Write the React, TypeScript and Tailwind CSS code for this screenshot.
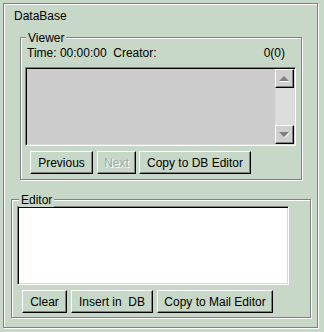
import React from 'react'

const etched = 'relative border border-[#808080] shadow-[inset_1px_1px_0_#fff,1px_1px_0_#fff]'
const sunken =
  'border border-t-[#808080] border-l-[#808080] border-r-white border-b-white shadow-[inset_1px_1px_0_#000,inset_-1px_-1px_0_#d8d8d8]'
const raised =
  'border border-t-white border-l-white border-r-black border-b-black shadow-[inset_-1px_-1px_0_#808080] bg-[#c8d8c8]'

function Btn({label, w, disabled, className = ''}: {label: string; w: string; disabled?: boolean; className?: string}) {
  return (
    <div className={`${raised} ${w} ${className} h-[23px] flex items-center justify-center whitespace-pre`}>
      <span className={disabled ? 'text-[#a0a8a0] [text-shadow:1px_1px_0_#fff]' : 'text-black'}>{label}</span>
    </div>
  )
}

function ScrollBtn({up}: {up?: boolean}) {
  return (
    <div className="w-[19px] h-[19px] bg-[#d0d0d0] border border-t-white border-l-white border-r-black border-b-black shadow-[inset_-1px_-1px_0_#808080] flex items-center justify-center">
      <svg width="11" height="7" viewBox="0 0 11 7">
        {up ? (
          <>
            <path d="M0 6 L5 1 L10 6 Z" fill="#808080" />
            <path d="M1 6.5 H10.5" stroke="#fff" strokeWidth="1" />
          </>
        ) : (
          <>
            <path d="M0 1 L10 1 L5 6 Z" fill="#808080" />
            <path d="M6 6.5 L10.5 1.5" stroke="#fff" strokeWidth="1" />
          </>
        )}
      </svg>
    </div>
  )
}

export default function App() {
  return (
    <div className="w-[324px] h-[332px] bg-[#c8d8c8] p-[3px] font-['Liberation_Sans',Arial,sans-serif] text-[12px] leading-[14px] text-black">
      <div className={`${etched} w-[315px] h-[325px] flex flex-col`}>
        <div className="ml-[10px] mt-[5px]">DataBase</div>

        {/* Viewer */}
        <div className={`${etched} ml-[16px] mt-[14px] w-[282px] h-[143px] flex flex-col pl-[4px] pt-[8px]`}>
          <span className="absolute left-[5px] top-[-7px] px-[2px] bg-[#c8d8c8]">Viewer</span>
          <div className="flex justify-between pl-[2px] pr-[16px] whitespace-pre">
            <span>Time: 00:00:00  Creator:</span>
            <span>0(0)</span>
          </div>
          <div className={`${sunken} mt-[7px] w-[271px] h-[79px] flex p-[1px]`}>
            <div className="flex-1 bg-[#cccccc]" />
            <div className="w-[19px] flex flex-col bg-[#dcdcdc]">
              <ScrollBtn up />
              <div className="flex-1" />
              <ScrollBtn />
            </div>
          </div>
          <div className="flex mt-[5px] ml-[5px]">
            <Btn label="Previous" w="w-[63px]" />
            <Btn label="Next" w="w-[39px]" disabled className="ml-[4px]" />
            <Btn label="Copy to DB Editor" w="w-[112px]" className="ml-[3px]" />
          </div>
        </div>

        {/* Editor */}
        <div className={`${etched} ml-[7px] mt-[19px] w-[300px] h-[119px] flex flex-col pl-[5px] pt-[6px]`}>
          <span className="absolute left-[7px] top-[-7px] px-[2px] bg-[#c8d8c8]">Editor</span>
          <div className={`${sunken} w-[272px] h-[79px] bg-white`} />
          <div className="flex mt-[5px] ml-[5px] gap-[4px]">
            <Btn label="Clear" w="w-[45px]" />
            <Btn label="Insert in  DB" w="w-[82px]" />
            <Btn label="Copy to Mail Editor" w="w-[116px]" />
          </div>
        </div>
      </div>
    </div>
  )
}
